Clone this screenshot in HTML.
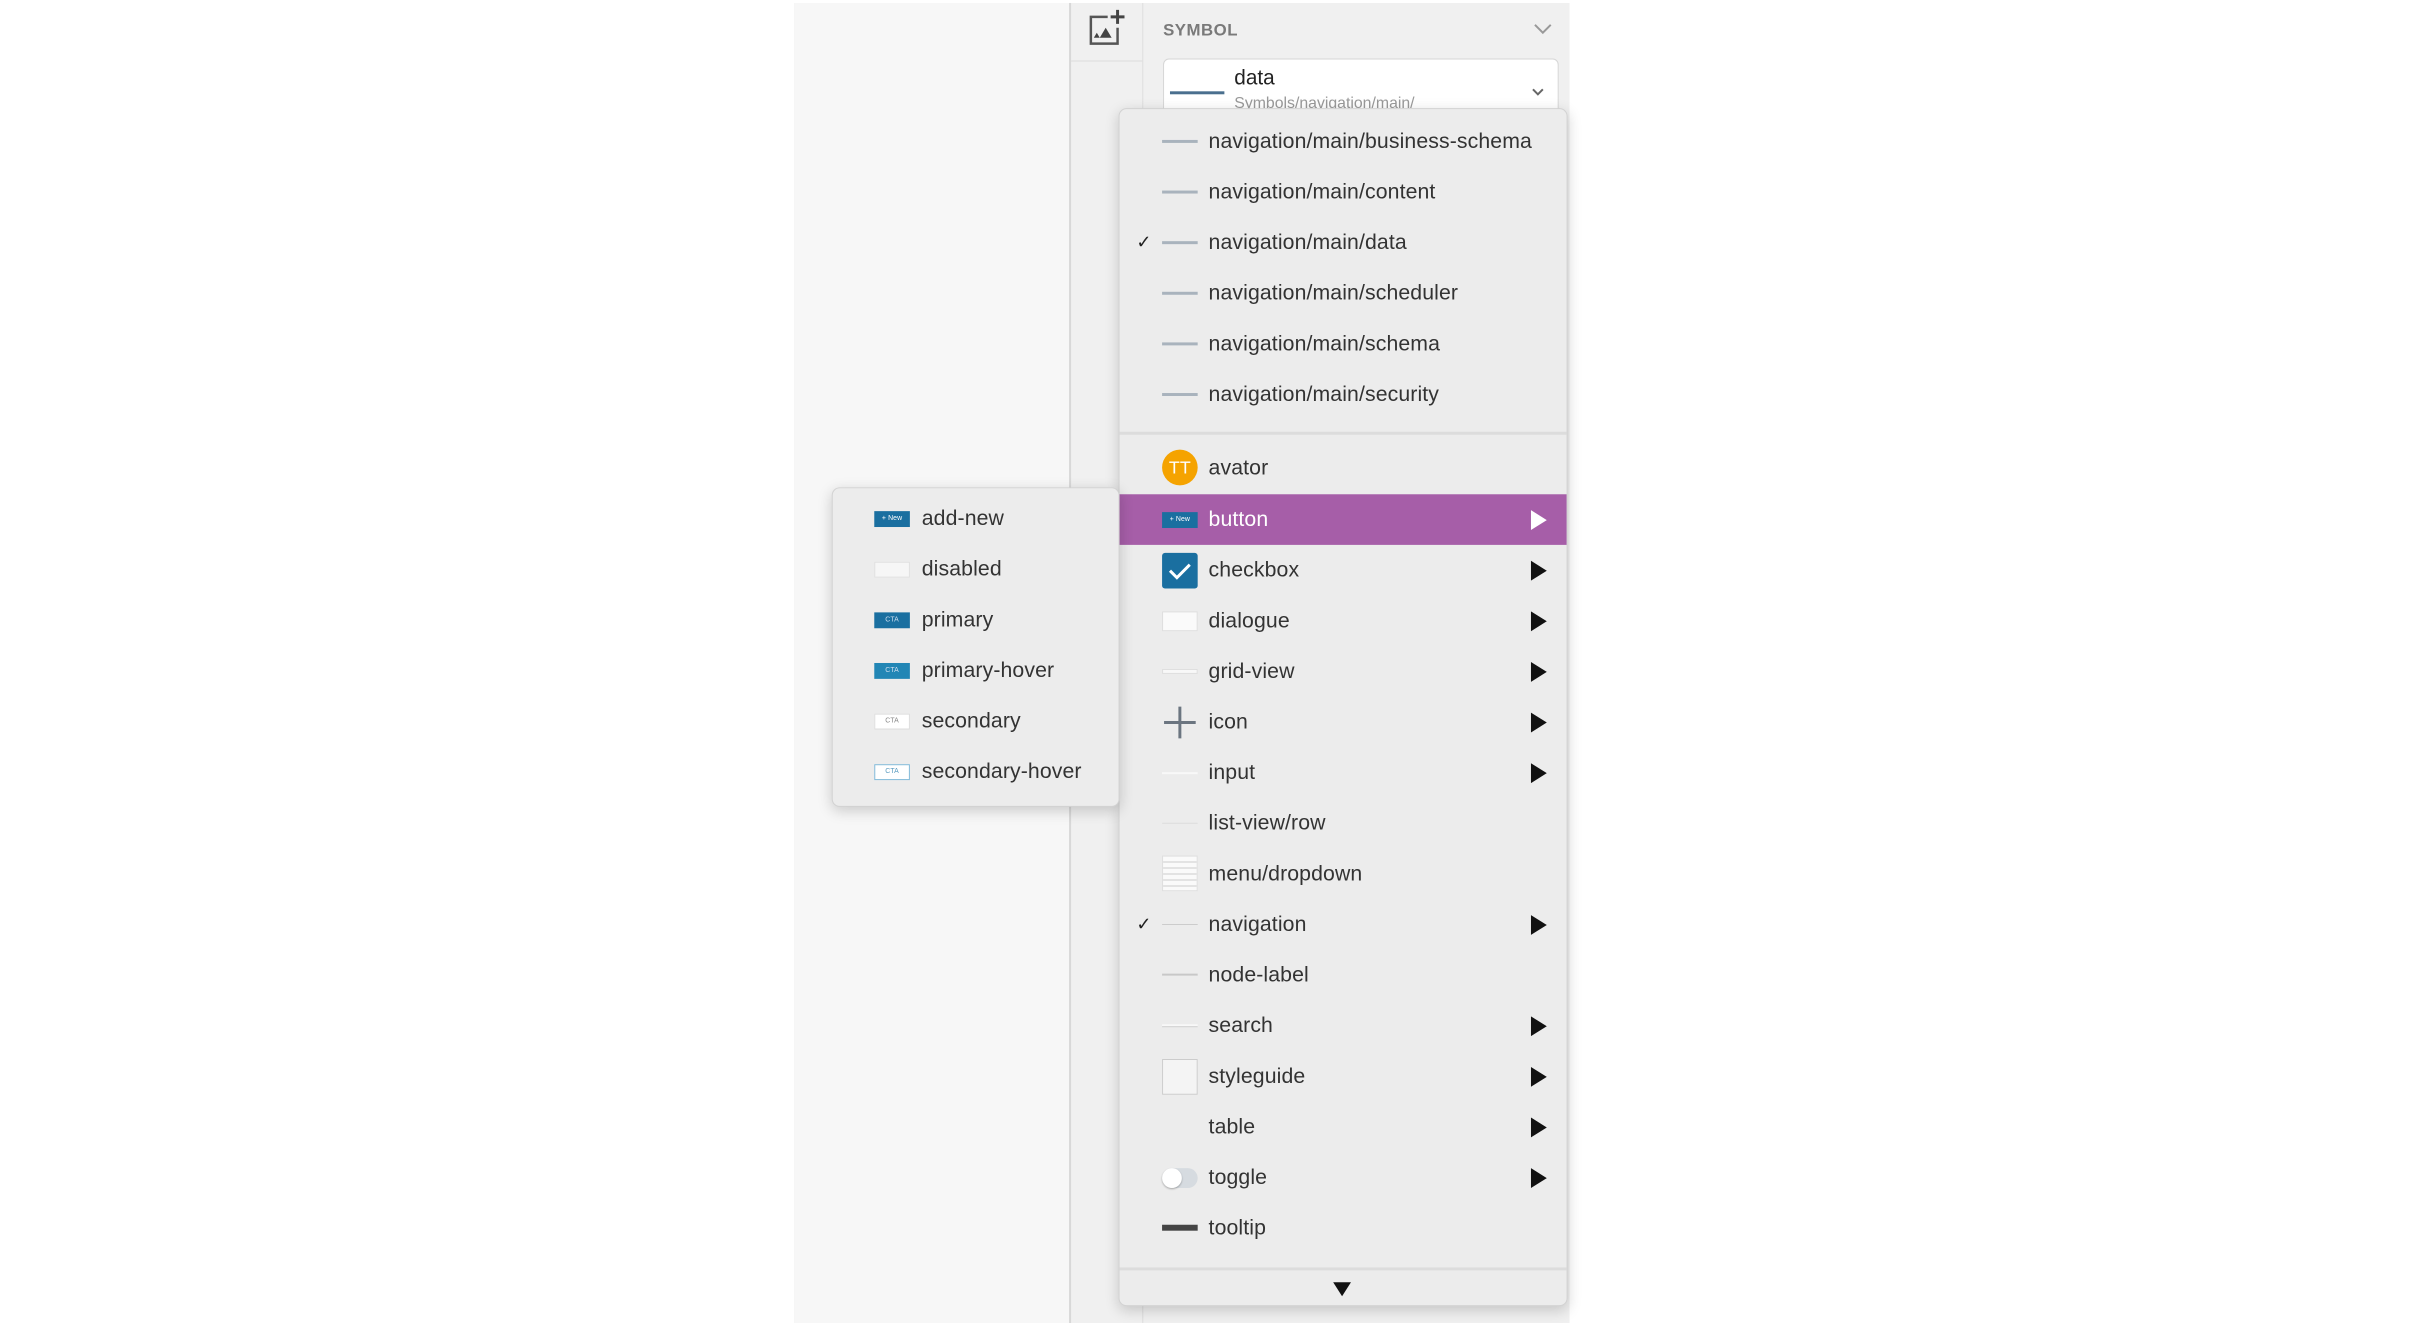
<!DOCTYPE html>
<html><head><meta charset="utf-8"><style>
*{margin:0;padding:0;box-sizing:border-box}
body{width:2414px;height:1319px;background:#fff;position:relative;overflow:hidden;font-family:"Liberation Sans",sans-serif;color:#333}
#w{position:absolute;left:0;top:0;width:2414px;height:1330px;transform:scale(0.989,0.9925);transform-origin:0 0}
.a{position:absolute}
.row{position:absolute;left:0;right:0;height:51px;display:flex;align-items:center;font-size:21.5px;letter-spacing:0.1px}
.ic{position:absolute;width:36px;height:22px}
.tx{position:absolute}
.ar{position:absolute;left:416px;width:0;height:0;border-left:16px solid #111;border-top:10px solid transparent;border-bottom:10px solid transparent}
.ln{height:3px;background:#a9b3bd;top:24px}
.ck{position:absolute;left:17px;font-size:18px;color:#222}
</style></head><body><div id="w">
<div class="a" style="left:803px;top:3px;width:784px;height:1330px;background:#f0f0f0"></div>
<div class="a" style="left:803px;top:3px;width:278px;height:1330px;background:#f7f7f7"></div>
<div class="a" style="left:1081px;top:3px;width:2px;height:1330px;background:#d8d8d8"></div>
<div class="a" style="left:1155px;top:3px;width:1px;height:1330px;background:#dedede"></div>
<div class="a" style="left:1083px;top:61px;width:72px;height:1px;background:#dcdcdc"></div>
<svg class="a" style="left:1100px;top:8px" width="40" height="40" viewBox="0 0 40 40"><path d="M20 9H3v27h27V20" fill="none" stroke="#555" stroke-width="2.5"/><path d="M30 2v14M23 9h14" stroke="#444" stroke-width="3"/><path d="M12 30l6-10 6 10z M6 30l3-5 3 5z" fill="#444"/></svg>
<div class="a" style="left:1176px;top:21px;font-size:17px;font-weight:bold;color:#7a7a7a;letter-spacing:.5px">SYMBOL</div>
<svg class="a" style="left:1550px;top:22px" width="20" height="14"><path d="M2 3l8 8 8-8" fill="none" stroke="#999" stroke-width="2"/></svg>
<div class="a" style="left:1176px;top:59px;width:400px;height:60px;background:#fff;border:1px solid #d6d6d6;border-radius:6px"></div>
<div class="a" style="left:1183px;top:92px;width:55px;height:3px;background:#4a6f8e"></div>
<div class="a" style="left:1248px;top:67px;font-size:21px;color:#222">data</div>
<div class="a" style="left:1248px;top:96px;font-size:16px;color:#999">Symbols/navigation/main/</div>
<svg class="a" style="left:1548px;top:88px" width="14" height="10"><path d="M2 2l5 5 5-5" fill="none" stroke="#666" stroke-width="2"/></svg>

<div class="a" style="left:1131px;top:109px;width:454px;height:1207px;background:#ececec;border:1px solid #d2d2d2;border-radius:8px;box-shadow:0 4px 14px rgba(0,0,0,.18)">
 <div class="row" style="top:7px"><div class="ic ln" style="left:43px"></div><span class="tx" style="left:90px">navigation/main/business-schema</span></div>
 <div class="row" style="top:58px"><div class="ic ln" style="left:43px"></div><span class="tx" style="left:90px">navigation/main/content</span></div>
 <div class="row" style="top:109px"><span class="ck">✓</span><div class="ic ln" style="left:43px"></div><span class="tx" style="left:90px">navigation/main/data</span></div>
 <div class="row" style="top:160px"><div class="ic ln" style="left:43px"></div><span class="tx" style="left:90px">navigation/main/scheduler</span></div>
 <div class="row" style="top:211px"><div class="ic ln" style="left:43px"></div><span class="tx" style="left:90px">navigation/main/schema</span></div>
 <div class="row" style="top:262px"><div class="ic ln" style="left:43px"></div><span class="tx" style="left:90px">navigation/main/security</span></div>
 <div class="a" style="left:0;right:0;top:325px;height:3px;background:#dcdcdc"></div>
 <div class="row" style="top:336px"><div class="ic" style="left:43px;top:7px;width:36px;height:36px;border-radius:50%;background:#f5a300;color:#fff;font-size:18px;text-align:center;line-height:36px">TT</div><span class="tx" style="left:90px">avator</span></div>
 <div class="row" style="top:388px;background:#a65ea8;color:#fff"><div class="ic" style="left:43px;top:18px;height:16px;background:#1a6fa0;font-size:7px;color:#fff;line-height:16px;text-align:center">+ New</div><span class="tx" style="left:90px">button</span><div class="ar" style="border-left-color:#fff"></div></div>
 <div class="row" style="top:439px"><div class="ic" style="left:43px;top:8px;width:36px;height:36px;background:#1a6fa0;border-radius:3px"><svg width="36" height="36"><path d="M8 18l7 7 13-13" fill="none" stroke="#fff" stroke-width="3"/></svg></div><span class="tx" style="left:90px">checkbox</span><div class="ar"></div></div>
 <div class="row" style="top:490px"><div class="ic" style="left:43px;top:16px;height:20px;background:#fafafa;border:1px solid #ddd"></div><span class="tx" style="left:90px">dialogue</span><div class="ar"></div></div>
 <div class="row" style="top:541px"><div class="ic" style="left:43px;top:23px;height:5px;background:#f8f8f8;border:1px solid #ddd"></div><span class="tx" style="left:90px">grid-view</span><div class="ar"></div></div>
 <div class="row" style="top:592px"><svg style="position:absolute;left:43px;top:8px" width="36" height="36"><path d="M18 2v32M2 18h32" stroke="#6b7580" stroke-width="3"/></svg><span class="tx" style="left:90px">icon</span><div class="ar"></div></div>
 <div class="row" style="top:643px"><div class="ic" style="left:43px;top:25px;height:2px;background:#f8f8f8"></div><span class="tx" style="left:90px">input</span><div class="ar"></div></div>
 <div class="row" style="top:694px"><div class="ic" style="left:43px;top:25px;height:1px;background:#ddd"></div><span class="tx" style="left:90px">list-view/row</span></div>
 <div class="row" style="top:745px"><div class="ic" style="left:43px;top:7px;height:36px;background:#fafafa;border:1px solid #ddd;background-image:repeating-linear-gradient(#fafafa 0 5px,#ccc 5px 6px)"></div><span class="tx" style="left:90px">menu/dropdown</span></div>
 <div class="row" style="top:796px"><span class="ck">✓</span><div class="ic" style="left:43px;top:25px;height:1px;background:#ccc"></div><span class="tx" style="left:90px">navigation</span><div class="ar"></div></div>
 <div class="row" style="top:847px"><div class="ic" style="left:43px;top:24px;height:2px;background:#c8c8c8"></div><span class="tx" style="left:90px">node-label</span></div>
 <div class="row" style="top:898px"><div class="ic" style="left:43px;top:24px;height:3px;background:#f8f8f8;border-bottom:1px solid #ccc"></div><span class="tx" style="left:90px">search</span><div class="ar"></div></div>
 <div class="row" style="top:949px"><div class="ic" style="left:43px;top:8px;height:36px;background:#f4f4f4;border:1px solid #ccc"></div><span class="tx" style="left:90px">styleguide</span><div class="ar"></div></div>
 <div class="row" style="top:1000px"><span class="tx" style="left:90px">table</span><div class="ar"></div></div>
 <div class="row" style="top:1051px"><div class="ic" style="left:43px;top:16px;height:20px;border-radius:10px;background:#d6dbe0"><div style="width:20px;height:20px;border-radius:50%;background:#fff;box-shadow:0 1px 2px rgba(0,0,0,.3)"></div></div><span class="tx" style="left:90px">toggle</span><div class="ar"></div></div>
 <div class="row" style="top:1102px"><div class="ic" style="left:43px;top:22px;height:6px;background:#444"></div><span class="tx" style="left:90px">tooltip</span></div>
 <div class="a" style="left:0;right:0;top:1167px;height:3px;background:#dcdcdc"></div>
 <div class="a" style="left:216px;top:1182px;width:0;height:0;border-top:14px solid #111;border-left:9px solid transparent;border-right:9px solid transparent"></div>
</div>

<div class="a" style="left:841px;top:491px;width:291px;height:322px;background:#ececec;border:1px solid #d2d2d2;border-radius:8px;box-shadow:0 4px 14px rgba(0,0,0,.18)">
 <div class="row" style="top:5px"><div class="ic" style="left:42px;top:18px;height:16px;background:#1a6fa0;font-size:7px;color:#fff;line-height:16px;text-align:center">+ New</div><span class="tx" style="left:90px">add-new</span></div>
 <div class="row" style="top:56px"><div class="ic" style="left:42px;top:18px;height:16px;background:#f6f6f6;border:1px solid #e0e0e0"></div><span class="tx" style="left:90px">disabled</span></div>
 <div class="row" style="top:107px"><div class="ic" style="left:42px;top:18px;height:16px;background:#1a6fa0;font-size:7px;color:#cde;line-height:16px;text-align:center">CTA</div><span class="tx" style="left:90px">primary</span></div>
 <div class="row" style="top:158px"><div class="ic" style="left:42px;top:18px;height:16px;background:#2286b5;font-size:7px;color:#cde;line-height:16px;text-align:center">CTA</div><span class="tx" style="left:90px">primary-hover</span></div>
 <div class="row" style="top:209px"><div class="ic" style="left:42px;top:18px;height:16px;background:#fff;border:1px solid #ddd;font-size:7px;color:#888;line-height:14px;text-align:center">CTA</div><span class="tx" style="left:90px">secondary</span></div>
 <div class="row" style="top:260px"><div class="ic" style="left:42px;top:18px;height:16px;background:#fff;border:1px solid #7fb8d8;font-size:7px;color:#5a9bc0;line-height:14px;text-align:center">CTA</div><span class="tx" style="left:90px">secondary-hover</span></div>
</div>
</div></body></html>
